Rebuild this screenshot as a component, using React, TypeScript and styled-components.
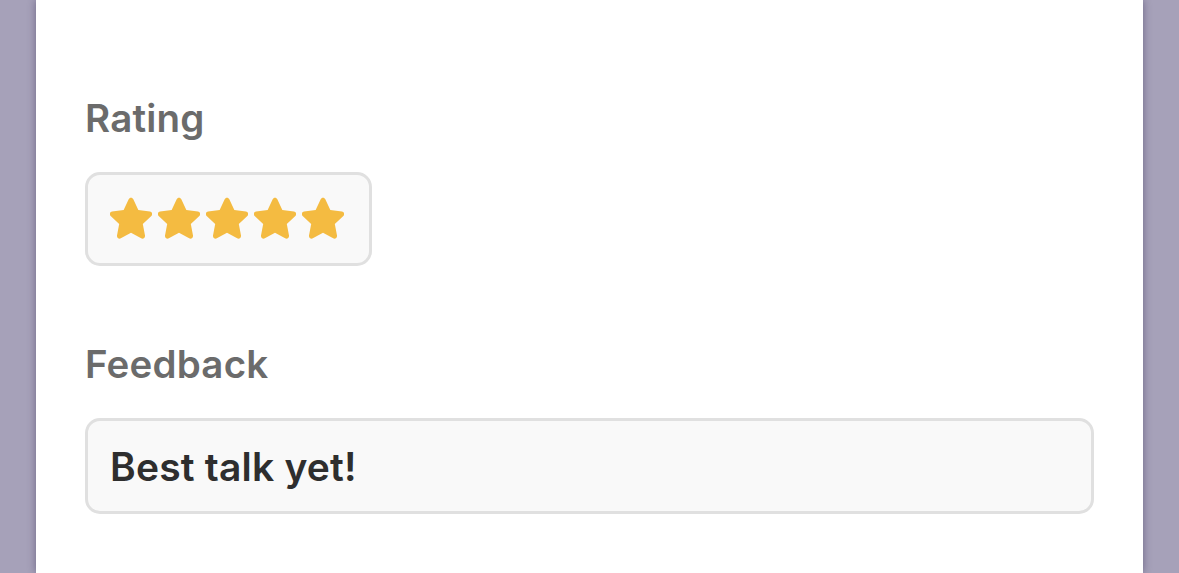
import React from "react";
import styled, { createGlobalStyle } from "styled-components";

const Global = createGlobalStyle`
  html, body { margin: 0; padding: 0; height: 100%; }
  body {
    background: #a6a1b9;
    font-family: Inter, "Noto Sans", "Liberation Sans", sans-serif;
    overflow: hidden;
  }
`;

const Stage = styled.div`
  width: 1179px;
  height: 573px;
  display: flex;
  justify-content: flex-start;
  padding-left: 36px;
  box-sizing: border-box;
`;

const Card = styled.div`
  width: 1107px;
  height: 573px;
  background: #ffffff;
  box-shadow: 0 0 8px rgba(40, 30, 70, 0.45);
  box-sizing: border-box;
  padding: 96px 49px 0 49px;
  display: flex;
  flex-direction: column;
`;

const Label = styled.div`
  font-size: 38.5px;
  font-weight: 600;
  color: #6b6b6b;
  line-height: 44px;
  letter-spacing: 0.2px;
  margin-bottom: 32px;
`;

const Field = styled.div<{ $width?: number; $height: number }>`
  box-sizing: border-box;
  width: ${(p) => (p.$width ? `${p.$width}px` : "100%")};
  height: ${(p) => p.$height}px;
  border: 3px solid #e0e0e0;
  border-radius: 15px;
  background: #f9f9f9;
  display: flex;
  align-items: center;
  padding-left: 22px;
`;

const Stars = styled.div`
  display: flex;
  gap: 6px;
  margin-top: -3px;
`;

const Section = styled.div<{ $mb: number }>`
  margin-bottom: ${(p) => p.$mb}px;
`;

const Value = styled.div`
  font-size: 39px;
  font-weight: 600;
  color: #2e2e2e;
  letter-spacing: 0.2px;
`;

const Star = () => (
  <svg width="42" height="42" viewBox="2.7 2.3 18.6 18.6">
    <path
      d="M12 2.6c.45 0 .85.26 1.03.67l2.22 4.74 5.13.68c.45.06.82.38.95.81.13.43.01.9-.32 1.21l-3.78 3.56.97 5.1c.08.44-.1.89-.47 1.15-.36.26-.84.29-1.23.07L12 18.1l-4.5 2.49c-.39.22-.87.19-1.23-.07-.37-.26-.55-.71-.47-1.15l.97-5.1-3.78-3.56c-.33-.31-.45-.78-.32-1.21.13-.43.5-.75.95-.81l5.13-.68 2.22-4.74c.18-.41.58-.67 1.03-.67z"
      fill="#f4bb41"
    />
  </svg>
);

export default function App() {
  return (
    <>
      <Global />
      <Stage>
        <Card>
          <Section $mb={76}>
            <Label>Rating</Label>
            <Field $width={287} $height={94}>
              <Stars>
                {[0, 1, 2, 3, 4].map((i) => (
                  <Star key={i} />
                ))}
              </Stars>
            </Field>
          </Section>
          <Section $mb={0}>
            <Label>Feedback</Label>
            <Field $height={96}>
              <Value>Best talk yet!</Value>
            </Field>
          </Section>
        </Card>
      </Stage>
    </>
  );
}
